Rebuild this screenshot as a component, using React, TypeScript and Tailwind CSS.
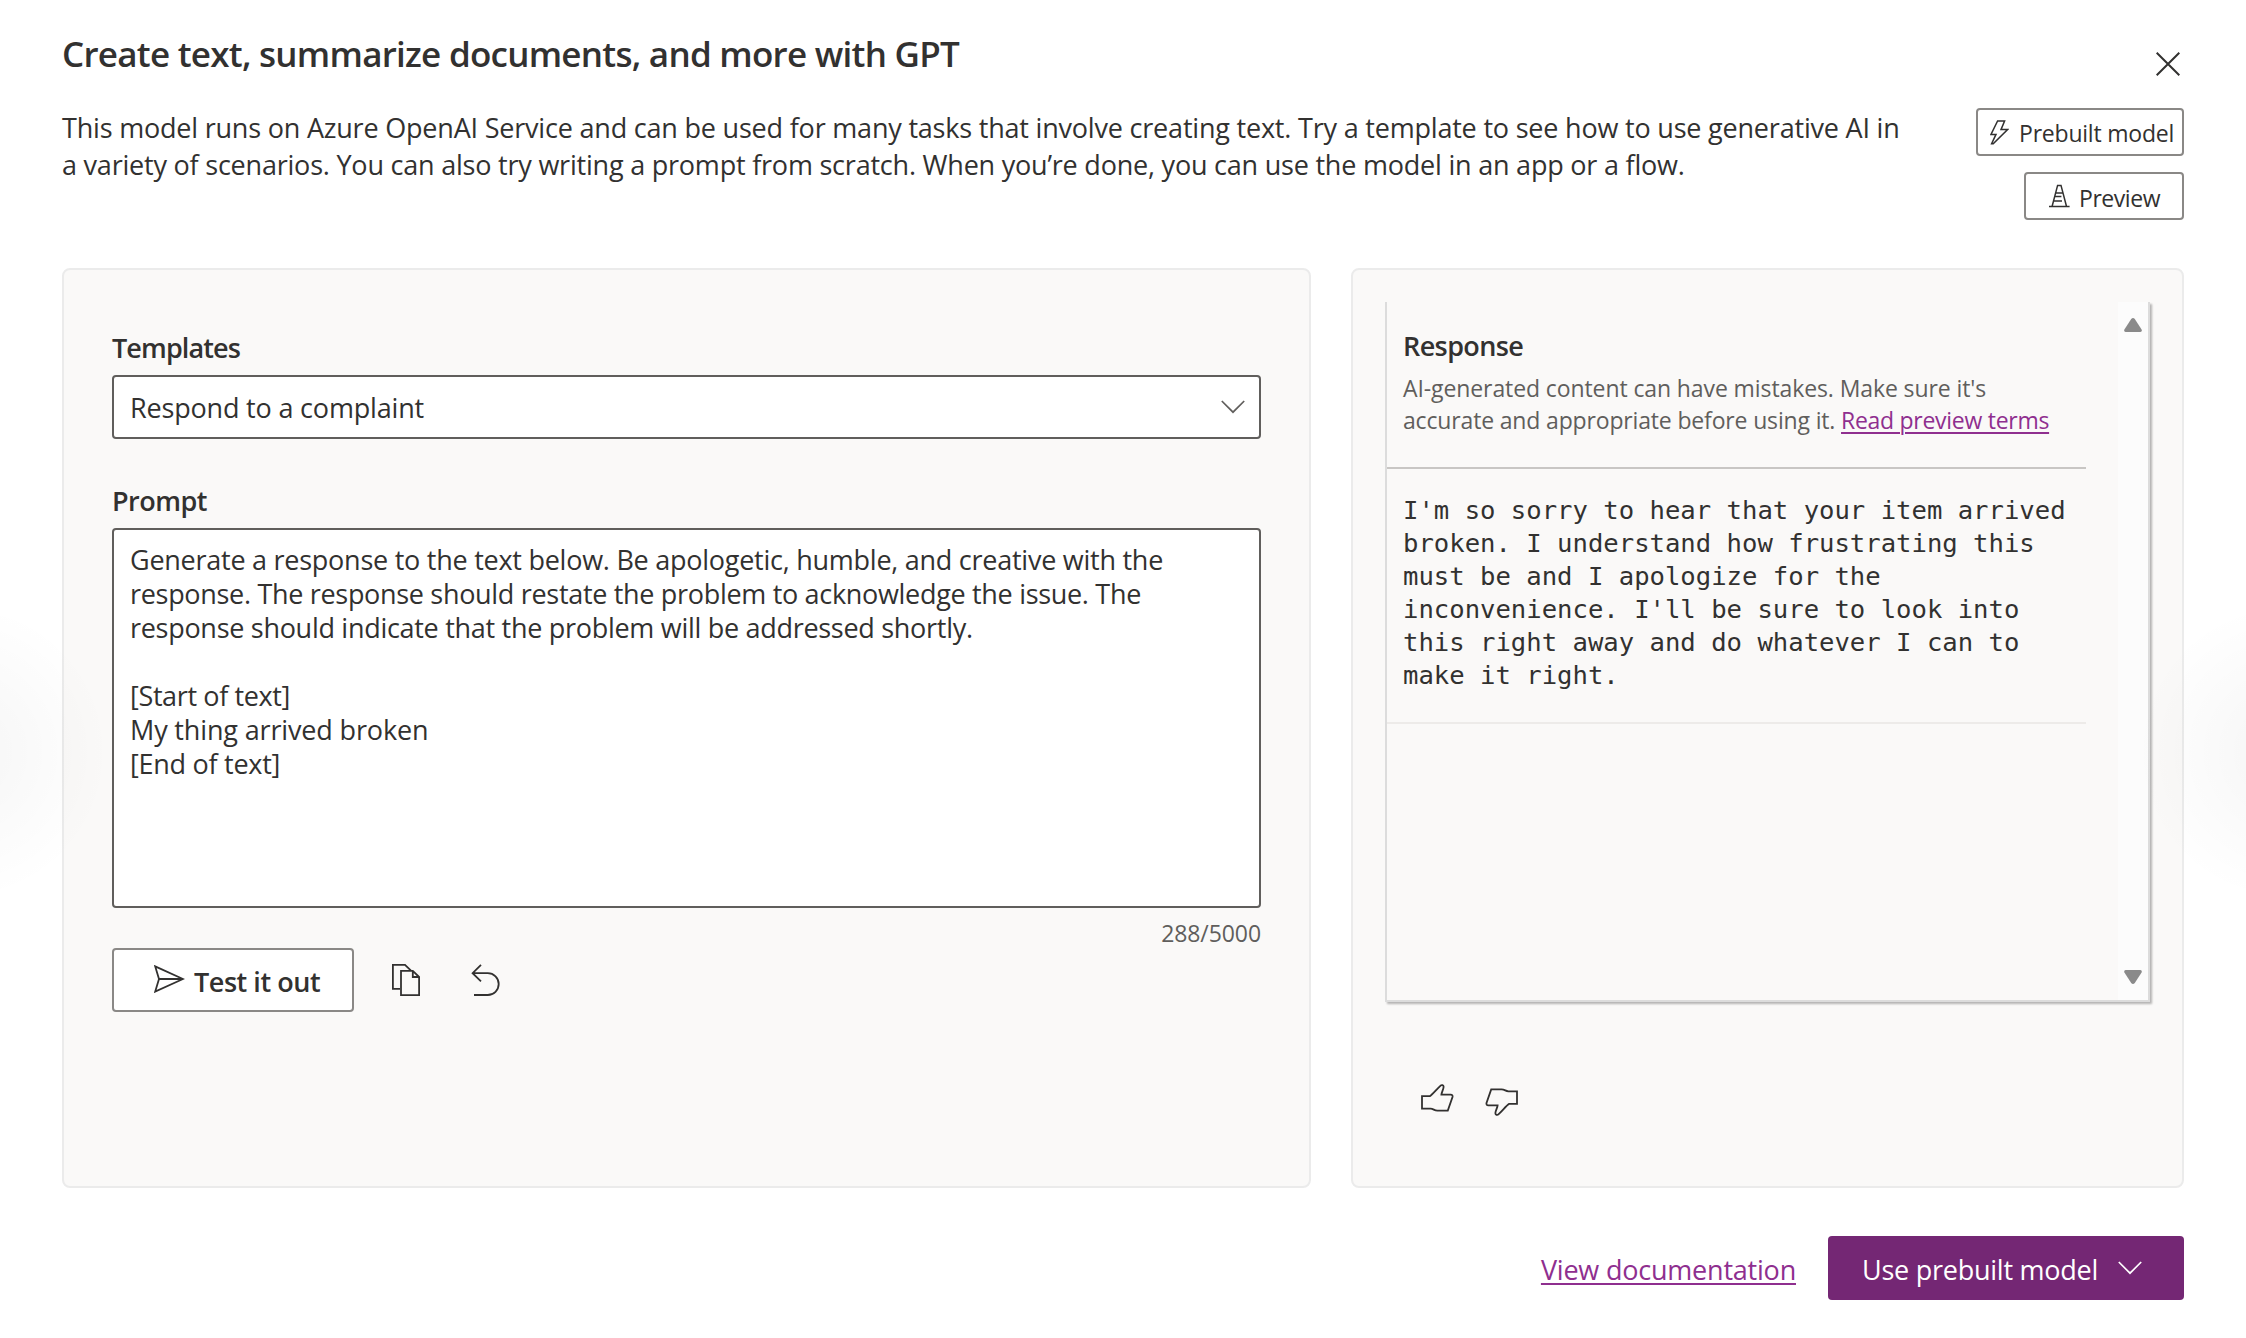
import type { ReactNode } from "react";

function Chevron({ className }: { className: string }) {
  return (
    <svg viewBox="0 0 24 14" className={className} fill="none" stroke="currentColor" strokeWidth="1.7">
      <path d="M0.8 1 L12 12.2 L23.2 1" />
    </svg>
  );
}

function Badge({ className, children }: { className: string; children: ReactNode }) {
  return (
    <div
      className={`flex h-12 items-center rounded-sm border-2 border-[#8a8886] text-[23px] leading-[30px] ${className}`}
    >
      {children}
    </div>
  );
}

const thumb =
  "M1 12.2 H8.8 C11.5 10.5 15 6 19.6 1.6 C20.6 0.6 22.8 1 22.6 3 C22.4 5.6 20.6 8 20.4 10.6 H29.6 C31.2 10.6 31.8 11.8 31.5 13 L26.8 26.6 H16.5 C13 26.6 12.6 24.7 9.5 24.7 H1 Z";

function Header() {
  return (
    <header className="flex justify-between">
      <div className="pt-px">
        <h1 className="whitespace-nowrap text-[35px] font-semibold leading-[48px] tracking-[-0.737px]">
          Create text, summarize documents, and more with GPT
        </h1>
        <p className="mt-[31px] whitespace-nowrap text-[27px] leading-[37px]">
          <span className="tracking-[-0.2px]">
            This model runs on Azure OpenAI Service and can be used for many tasks that involve creating text. Try a
            template to see how to use generative AI in
          </span>
          <br />
          <span className="tracking-[-0.214px]">
            a variety of scenarios. You can also try writing a prompt from scratch. When you’re done, you can use the
            model in an app or a flow.
          </span>
        </p>
      </div>
      <div className="flex flex-col items-end">
        <button aria-label="Close" className="mr-1 mt-[23px]">
          <svg viewBox="0 0 24 24" className="size-6" fill="none" stroke="currentColor" strokeWidth="2">
            <path d="M0.7 0.7 L23.3 23.3 M23.3 0.7 L0.7 23.3" />
          </svg>
        </button>
        <Badge className="mt-8 w-[208px] pl-3 tracking-[-0.21px]">
          <svg viewBox="0 0 19 25" className="h-[25px] w-[19px]" fill="none" stroke="currentColor" strokeWidth="1.5">
            <path d="M7.6 1 H14.6 L11 9.6 H17.6 L3.2 23.8 H1.6 L6 14.4 H1 Z" />
          </svg>
          <span className="ml-2.5 whitespace-nowrap pt-0.5">Prebuilt model</span>
        </Badge>
        <Badge className="mt-4 w-40 pl-[23px] tracking-[-0.45px]">
          <svg viewBox="0 0 21 24" className="h-6 w-[21px]" fill="none" stroke="currentColor" strokeWidth="1.5">
            <path d="M0 22.4 H20.6 M3.2 22 L8.6 1.4 H12 L17.4 22 M7.2 9 H13.4 M5.6 12.4 H12.4 M4.6 17 H13" />
          </svg>
          <span className="ml-[9px] whitespace-nowrap pt-[3px]">Preview</span>
        </Badge>
      </div>
    </header>
  );
}

function PromptPanel() {
  return (
    <section className="h-[920px] w-[1249px] rounded-lg border-2 border-[#ebebeb] bg-[#faf9f8] px-12 pt-[60px] text-[27px]">
      <h2 className="font-semibold leading-9 tracking-[-0.89px]">Templates</h2>
      <div className="mt-[9px] flex h-16 items-center justify-between rounded-sm border-2 border-[#605e5c] bg-white pl-4 pr-3.5">
        <span className="pt-0.5 tracking-[-0.18px]">Respond to a complaint</span>
        <Chevron className="h-3.5 w-6 text-[#605e5c]" />
      </div>
      <h2 className="mt-11 font-semibold leading-9 tracking-[-0.5px]">Prompt</h2>
      <div className="mt-[9px] h-[380px] whitespace-nowrap rounded-sm border-2 border-[#605e5c] bg-white pl-4 pt-[13px] leading-[34px]">
        <p className="tracking-[-0.255px]">
          Generate a response to the text below. Be apologetic, humble, and creative with the
        </p>
        <p className="tracking-[-0.312px]">
          response. The response should restate the problem to acknowledge the issue. The
        </p>
        <p className="tracking-[-0.29px]">response should indicate that the problem will be addressed shortly.</p>
        <p className="mt-[34px] tracking-[-0.38px]">[Start of text]</p>
        <p className="tracking-[-0.15px]">My thing arrived broken</p>
        <p className="tracking-[-0.277px]">[End of text]</p>
      </div>
      <p className="mt-2.5 text-right text-[23px] leading-[30px] tracking-[-0.08px] text-[#605e5c]">288/5000</p>
      <div className="flex items-center">
        <button className="flex h-16 w-[242px] items-center rounded-sm border-2 border-[#8a8886] bg-white pl-10">
          <svg viewBox="0 0 31 28" className="-mt-0.5 h-7 w-[31px]" fill="none" stroke="currentColor" strokeWidth="1.8">
            <path d="M1.2 1.4 L29 14 L1.2 26.6 L5 14 Z M5 14 H28" />
          </svg>
          <span className="ml-[9px] whitespace-nowrap pt-1 font-semibold tracking-[-0.46px]">Test it out</span>
        </button>
        <button aria-label="Copy" className="ml-[38px]">
          <svg viewBox="0 0 28 32" className="h-8 w-7" fill="none" stroke="currentColor" strokeWidth="1.8">
            <path d="M8 24.8 H0.9 V0.9 H13 L19 6.6 M9 6.9 H20.8 L27.1 13 V31.1 H9 Z M20.8 6.9 V13 H27.1" />
          </svg>
        </button>
        <button aria-label="Undo" className="ml-[51px]">
          <svg viewBox="0 0 29 32" className="h-8 w-[29px]" fill="none" stroke="currentColor" strokeWidth="1.8">
            <path d="M10 0.9 L1.6 9.2 L10 17.4 M1.6 9.2 H16.8 A10.9 10.9 0 0 1 16.8 31 H3" />
          </svg>
        </button>
      </div>
    </section>
  );
}

function ResponsePanel() {
  return (
    <section className="h-[920px] w-[833px] rounded-lg border-2 border-[#ebebeb] bg-[#faf9f8] px-8 pt-8">
      <div className="flex h-[700px] w-[765px] justify-between border-x-2 border-b-2 border-[#dcdcdc] shadow-[2px_2px_2px_rgba(0,0,0,0.28)]">
        <div className="w-[699px] whitespace-nowrap">
          <div className="h-[167px] border-b-2 border-[#c8c6c4] pl-4 pt-[26px]">
            <h2 className="text-[27px] font-semibold leading-9 tracking-[-0.6px]">Response</h2>
            <p className="mt-2 text-[23px] leading-8 text-[#605e5c]">
              <span className="tracking-[-0.1px]">AI-generated content can have mistakes. Make sure it's</span>
              <br />
              <span className="tracking-[-0.16px]">accurate and appropriate before using it. </span>
              <a className="tracking-[-0.28px] text-[#8f2f8f] underline decoration-2 underline-offset-[3px]">
                Read preview terms
              </a>
            </p>
          </div>
          <p className="h-[255px] whitespace-pre-line border-b-2 border-[#edebe9] pl-4 pt-[25px] font-['DejaVu_Sans_Mono',monospace] text-[25.6px] leading-[33px]">
            {`I'm so sorry to hear that your item arrived
            broken. I understand how frustrating this
            must be and I apologize for the
            inconvenience. I'll be sure to look into
            this right away and do whatever I can to
            make it right.`}
          </p>
        </div>
        <div className="flex w-[30px] flex-col items-center justify-between bg-[#fcfcfc] pb-4 pt-4 text-[#8a8a8a]">
          <svg viewBox="0 0 18 14" className="h-3.5 w-[18px]" fill="currentColor">
            <path d="M7.2 1 Q9 -0.8 10.8 1 L17.6 11.4 Q18.4 13.6 16.4 14 H1.6 Q-0.4 13.6 0.4 11.4 Z" />
          </svg>
          <svg viewBox="0 0 18 14" className="h-3.5 w-[18px] rotate-180" fill="currentColor">
            <path d="M7.2 1 Q9 -0.8 10.8 1 L17.6 11.4 Q18.4 13.6 16.4 14 H1.6 Q-0.4 13.6 0.4 11.4 Z" />
          </svg>
        </div>
      </div>
      <div className="mt-[82px] flex gap-[31px] pl-9">
        <svg viewBox="0 0 33 28" className="h-7 w-[33px]" fill="none" stroke="currentColor" strokeWidth="1.8">
          <path d={thumb} />
        </svg>
        <svg
          viewBox="0 0 33 28"
          className="mt-1 h-7 w-[33px] rotate-180"
          fill="none"
          stroke="currentColor"
          strokeWidth="1.8"
        >
          <path d={thumb} />
        </svg>
      </div>
    </section>
  );
}

export default function App() {
  return (
    <div className="relative h-[1338px] w-[2246px] overflow-hidden bg-white px-[62px] pt-[29px] font-['Open_Sans',sans-serif] text-[#323130]">
      <Header />
      <main className="mt-12 flex gap-10">
        <PromptPanel />
        <ResponsePanel />
      </main>
      <footer className="mt-12 flex items-center justify-end gap-8 whitespace-nowrap text-[27px]">
        <a className="pt-1 tracking-[-0.21px] text-[#8f2f8f] underline decoration-2 underline-offset-[3px]">
          View documentation
        </a>
        <button className="flex h-16 w-[356px] items-center rounded-sm bg-[#742774] pl-[34px] text-white">
          <span className="pt-1 tracking-[-0.25px]">Use prebuilt model</span>
          <Chevron className="ml-5 h-3.5 w-6" />
        </button>
      </footer>
      <div className="pointer-events-none absolute -left-[190px] top-[602px] size-[300px] bg-[radial-gradient(closest-side,rgba(0,0,0,0.04),transparent)]" />
      <div className="pointer-events-none absolute -right-[190px] top-[602px] size-[300px] bg-[radial-gradient(closest-side,rgba(0,0,0,0.04),transparent)]" />
    </div>
  );
}
